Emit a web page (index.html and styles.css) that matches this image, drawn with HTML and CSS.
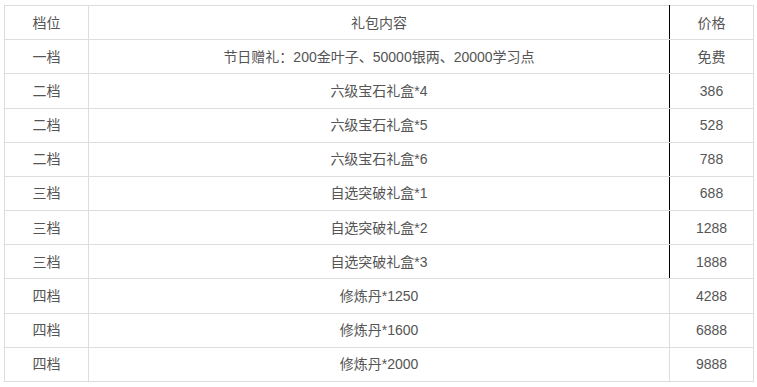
FILE: index.html
```html
<!DOCTYPE html>
<html lang="zh">
<head>
<meta charset="utf-8">
<link rel="stylesheet" href="styles.css">
</head>
<body>
<table class="gift-table">
  <colgroup><col class="c-tier"><col class="c-content"><col class="c-price"></colgroup>
  <tr><td>档位</td><td class="mark">礼包内容</td><td>价格</td></tr>
  <tr><td>一档</td><td class="mark">节日赠礼：200金叶子、50000银两、20000学习点</td><td>免费</td></tr>
  <tr><td>二档</td><td class="mark">六级宝石礼盒*4</td><td>386</td></tr>
  <tr><td>二档</td><td class="mark">六级宝石礼盒*5</td><td>528</td></tr>
  <tr><td>二档</td><td class="mark">六级宝石礼盒*6</td><td>788</td></tr>
  <tr><td>三档</td><td class="mark">自选突破礼盒*1</td><td>688</td></tr>
  <tr><td>三档</td><td class="mark">自选突破礼盒*2</td><td>1288</td></tr>
  <tr><td>三档</td><td class="mark">自选突破礼盒*3</td><td>1888</td></tr>
  <tr><td>四档</td><td>修炼丹*1250</td><td>4288</td></tr>
  <tr><td>四档</td><td>修炼丹*1600</td><td>6888</td></tr>
  <tr><td>四档</td><td>修炼丹*2000</td><td>9888</td></tr>
</table>
</body>
</html>
```
FILE: styles.css
```css
html, body {
  margin: 0;
  background: #fff;
}
body {
  padding: 5px 3px 0 4px;
  font-family: "Liberation Sans", "Noto Sans CJK SC", sans-serif;
  font-size: 14px;
  color: #555;
}
.gift-table {
  border-collapse: collapse;
  width: 750px;
  table-layout: fixed;
}
.c-tier { width: 84px; }
.c-price { width: 84px; }
.gift-table td {
  border: 1px solid #ddd;
  text-align: center;
  height: 33.18px;
  padding: 0;
  box-sizing: border-box;
  line-height: 20px;
}
.gift-table tr { height: 34.18px; }
.gift-table td.mark {
  border-right: 1px solid #000;
}
```
